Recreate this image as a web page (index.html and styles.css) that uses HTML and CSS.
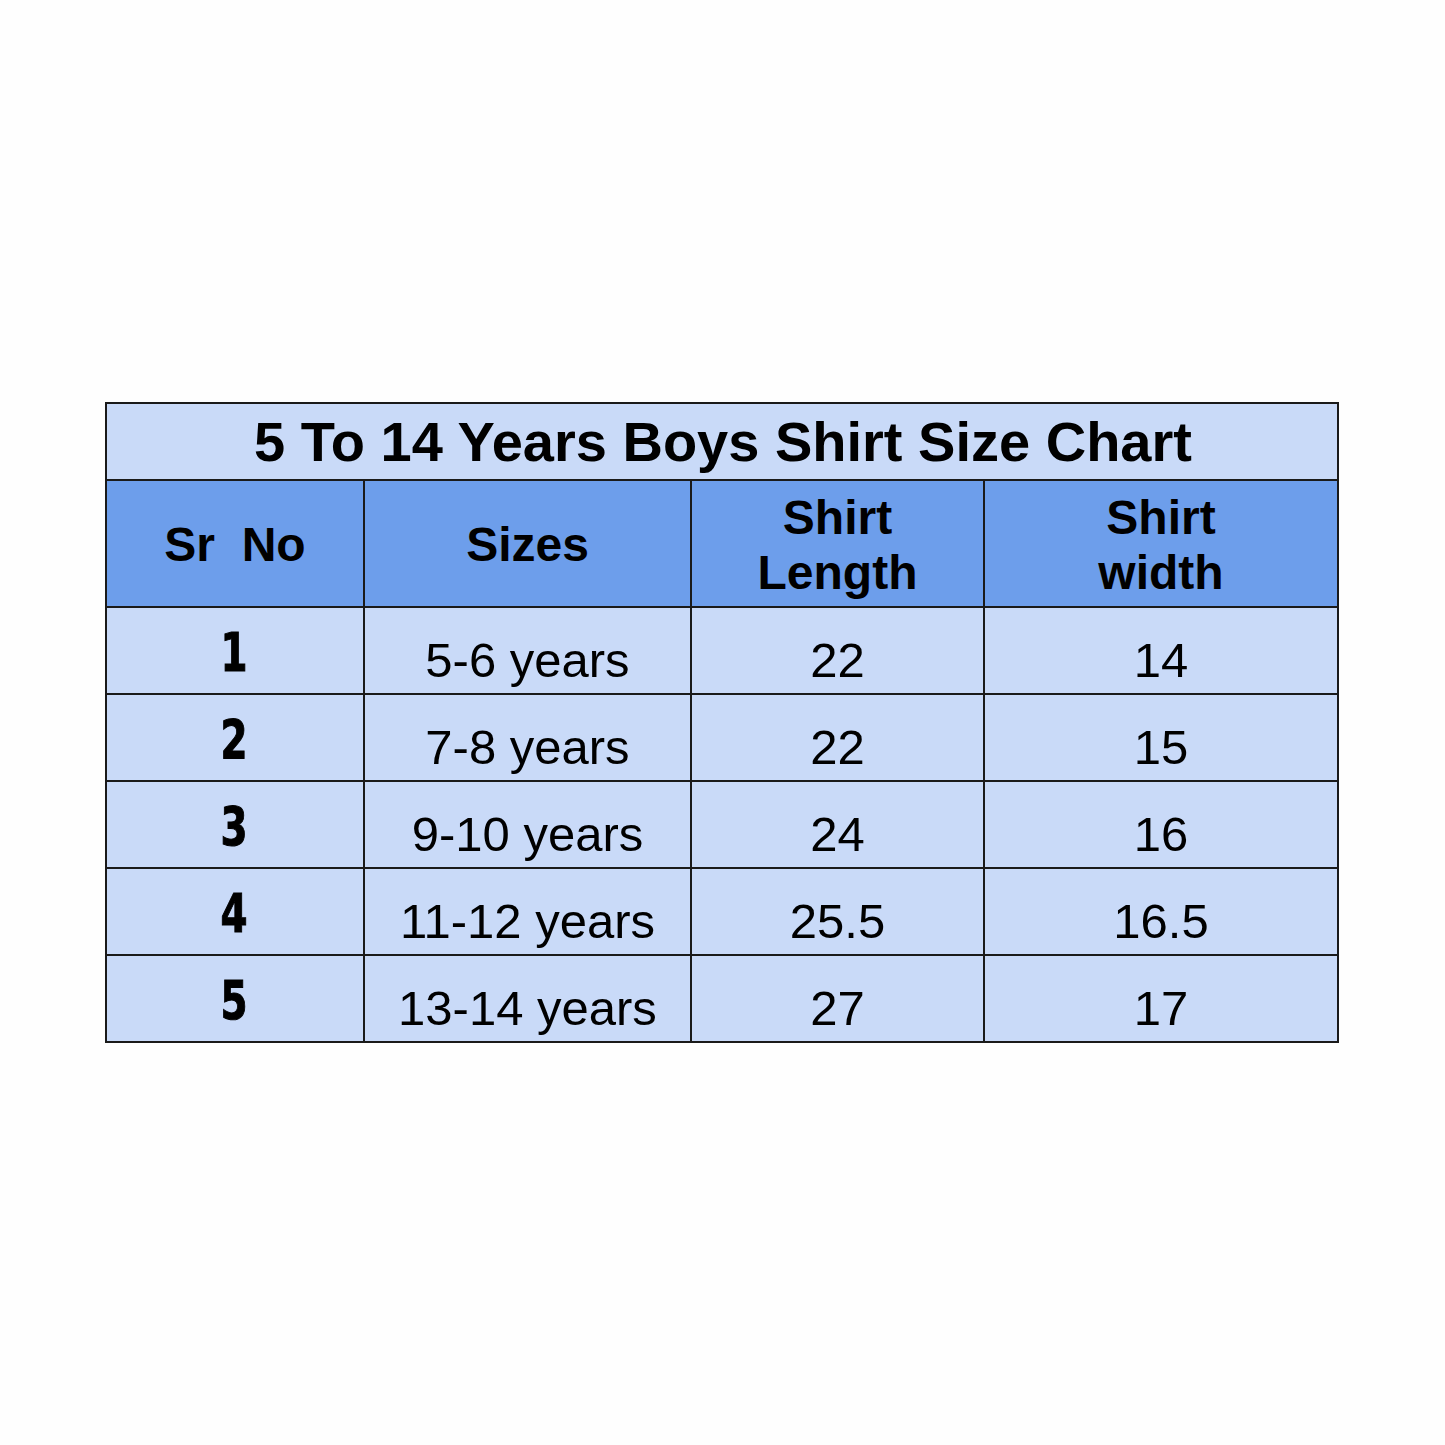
FILE: index.html
```html
<!DOCTYPE html>
<html lang="en">
<head>
<meta charset="utf-8">
<title>5 To 14 Years Boys Shirt Size Chart</title>
<link rel="stylesheet" href="styles.css">
</head>
<body>
<main class="page">
  <table class="chart">
    <colgroup>
      <col class="c1"><col class="c2"><col class="c3"><col class="c4">
    </colgroup>
    <thead>
      <tr class="title-row"><th colspan="4" class="title">5 To 14 Years Boys Shirt Size Chart</th></tr>
      <tr class="head-row">
        <th>Sr&nbsp; No</th>
        <th>Sizes</th>
        <th>Shirt<br>Length</th>
        <th>Shirt<br>width</th>
      </tr>
    </thead>
    <tbody>
      <tr><td class="num"><span>1</span></td><td>5-6 years</td><td>22</td><td>14</td></tr>
      <tr><td class="num"><span>2</span></td><td>7-8 years</td><td>22</td><td>15</td></tr>
      <tr><td class="num"><span>3</span></td><td>9-10 years</td><td>24</td><td>16</td></tr>
      <tr><td class="num"><span>4</span></td><td>11-12 years</td><td>25.5</td><td>16.5</td></tr>
      <tr><td class="num"><span>5</span></td><td>13-14 years</td><td>27</td><td>17</td></tr>
    </tbody>
  </table>
</main>
</body>
</html>
```
FILE: styles.css
```css
html, body {
  margin: 0;
  padding: 0;
  background: #fefefe;
}
.page {
  padding: 402px 0 0 105px;
  font-family: "Liberation Sans", Arial, sans-serif;
  color: #000;
}
.chart {
  border-collapse: collapse;
  table-layout: fixed;
  width: 1234px;
  background: #c9daf8;
}
.c1 { width: 258px; }
.c2 { width: 327px; }
.c3 { width: 293px; }
.c4 { width: 354px; }
.chart th, .chart td {
  border: 2px solid #1a1a1a;
  padding: 0;
  text-align: center;
}
.chart .title-row { height: 77px; }
.chart .title {
  font-size: 56px;
  font-weight: bold;
  line-height: 60px;
  vertical-align: middle;
  padding-left: 2px;
}
.chart .head-row { height: 127px; }
.chart .head-row th {
  background: #6d9eeb;
  font-size: 48px;
  font-weight: bold;
  line-height: 55px;
  vertical-align: middle;
  padding-top: 2px;
}
.chart tbody tr { height: 87px; }
.chart tbody td {
  font-size: 49px;
  line-height: 55px;
  vertical-align: bottom;
  padding-bottom: 5px;
}
.chart tbody td.num {
  font-family: "DejaVu Sans Condensed", "DejaVu Sans", sans-serif;
  font-weight: bold;
  font-size: 54px;
  line-height: 60px;
  padding-bottom: 10px;
  padding-right: 2px;
}
.chart tbody td.num span {
  display: inline-block;
  transform: scaleX(0.8);
  -webkit-text-stroke: 1px #000;
}
```
